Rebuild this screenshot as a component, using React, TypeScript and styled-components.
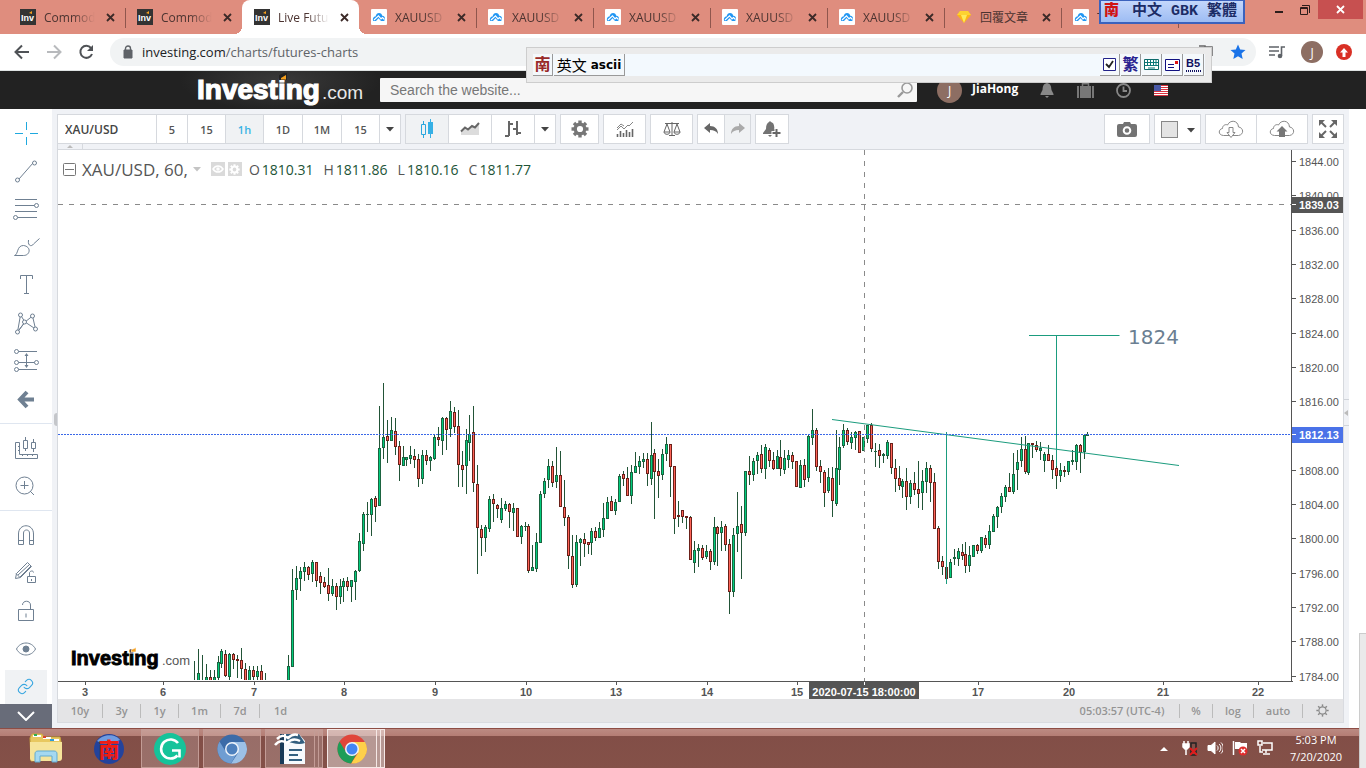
import React from 'react';
import styled, { createGlobalStyle, css } from 'styled-components';
import { Link as LinkIcon } from 'lucide-react';

const SANS = '"Open Sans", "Noto Sans CJK TC", sans-serif';
const ARIAL = '"Liberation Sans", "Noto Sans CJK TC", sans-serif';

const GlobalStyle = createGlobalStyle`
  *, *::before, *::after { box-sizing: border-box; }
  body { margin: 0; background: #fff; font-family: ${SANS}; overflow-x: hidden; }
  button, input { font: inherit; color: inherit; margin: 0; padding: 0; border: 0; background: none; }
  a { color: inherit; text-decoration: none; }
  svg { display: block; flex: none; }
`;

const Desktop = styled.div`
  position: relative;
  display: flex;
  flex-direction: column;
  min-height: 100vh;
`;

/* ---------- browser chrome ---------- */

const TabStrip = styled.div`
  display: flex;
  height: 34px;
  padding-left: 8px;
  background: #df8d7e;
  position: relative;
`;

const Tab = styled.div<{ $active?: boolean; $line?: boolean }>`
  position: relative;
  display: flex;
  align-items: center;
  flex: 0 0 117px;
  min-width: 0;
  padding: 0 9px 0 12px;
  font-size: 12px;
  color: #4b3330;
  ${(p) =>
    p.$line &&
    css`
      &::after {
        content: '';
        position: absolute;
        right: -1px;
        top: 8px;
        height: 20px;
        width: 1px;
        background: #8f564d;
      }
    `}
  ${(p) =>
    p.$active &&
    css`
      background: #fff;
      border-radius: 8px 8px 0 0;
      &::before,
      &::after {
        content: '';
        position: absolute;
        bottom: 0;
        width: 8px;
        height: 8px;
      }
      &::before {
        left: -8px;
        background: radial-gradient(circle at 0 0, transparent 8px, #fff 8px);
      }
      &::after {
        right: -8px;
        background: radial-gradient(circle at 100% 0, transparent 8px, #fff 8px);
      }
    `}
`;

const TabTitle = styled.span<{ $fade?: boolean }>`
  flex: 1;
  min-width: 0;
  margin: 0 8px;
  overflow: hidden;
  white-space: nowrap;
  ${(p) => p.$fade && css`mask-image: linear-gradient(to right, #000 55%, transparent 98%);`}
`;

const TabClose = styled.button`
  display: flex;
  flex: none;
  width: 12px;
  height: 16px;
  align-items: center;
  justify-content: center;
`;

const WindowButtons = styled.div`
  position: absolute;
  top: 0;
  right: 3px;
  display: flex;
  align-items: flex-start;
`;

const WindowButton = styled.button<{ $close?: boolean }>`
  display: flex;
  align-items: center;
  justify-content: center;
  width: ${(p) => (p.$close ? 45 : 26)}px;
  height: 19px;
  background: ${(p) => (p.$close ? '#c75050' : 'transparent')};
`;

const AddressRow = styled.div`
  display: flex;
  align-items: center;
  height: 37px;
  padding: 0 14px;
  border-bottom: 1px solid #dfe3e3;
  background: #fff;
`;

const NavButton = styled.button`
  display: flex;
  width: 16px;
  height: 24px;
  align-items: center;
  justify-content: center;
  margin-right: 16px;
`;

const Omnibox = styled.div`
  display: flex;
  align-items: center;
  gap: 16px;
  flex: 1;
  height: 28px;
  padding: 0 10px 0 12px;
  margin-right: 13px;
  border-radius: 14px;
  background: #f1f3f4;
  color: #5f6368;
  font-size: 13px;
`;

const Url = styled.span`
  display: flex;
  align-items: center;
  gap: 8px;
  flex: 1;
  b { font-weight: 400; color: #202124; }
`;

const ProfileGroup = styled.div`
  display: flex;
  align-items: center;
  gap: 13px;
`;

const RoundBadge = styled.button<{ $size: number; $color: string }>`
  display: flex;
  align-items: center;
  justify-content: center;
  width: ${(p) => p.$size}px;
  height: ${(p) => p.$size}px;
  border-radius: 50%;
  background: ${(p) => p.$color};
  color: #fff;
  font-size: 12px;
`;

/* ---------- site header ---------- */

const SiteHeader = styled.header`
  display: flex;
  align-items: center;
  height: 38px;
  padding-left: 197px;
  background: radial-gradient(ellipse 100px 30px at 280px 10px, #3a3a3a, #222);
`;

const SiteSearch = styled.label`
  display: flex;
  align-items: center;
  flex: 1;
  height: 24px;
  margin-left: 17px;
  padding: 0 4px 0 10px;
  background: #f6f6f6;
  border-radius: 1px;
  font: 14px ${ARIAL};
  input { flex: 1; outline: none; }
  input::placeholder { color: #777; opacity: 1; }
`;

const UserArea = styled.div`
  display: flex;
  align-items: center;
  width: 449px;
  padding-left: 20px;
`;

const UserName = styled.a`
  width: 56px;
  margin: 0 0 3px 10px;
  color: #fff;
  font-size: 12px;
  font-weight: 700;
`;

const HeaderIcon = styled.button`
  display: flex;
  width: 38px;
  justify-content: center;
`;

/* ---------- workspace ---------- */

const Workspace = styled.main`
  display: flex;
  flex: 1;
  padding-right: 17px;
`;

const DrawingRail = styled.nav`
  display: flex;
  flex-direction: column;
  width: 52px;
  padding-top: 5px;
  background: #fff;
`;

const ToolGroup = styled.div<{ $line?: boolean }>`
  ${(p) =>
    p.$line &&
    css`
      padding-bottom: 5px;
      margin-bottom: 5px;
      border-bottom: 1px solid #dfe6f0;
    `}
`;

const Tool = styled.button<{ $active?: boolean; $short?: boolean }>`
  display: block;
  width: 52px;
  height: ${(p) => (p.$short ? 36 : 38)}px;
  overflow: hidden;
  color: ${(p) => (p.$active ? '#37a6e0' : '#6f8092')};
  svg { fill: none; stroke: currentColor; }
`;

const RailMore = styled.button`
  display: flex;
  align-items: center;
  justify-content: center;
  width: 52px;
  height: 24px;
  margin-top: auto;
  background: #686c79;
`;

const ChartPanel = styled.section`
  position: relative;
  display: flex;
  flex-direction: column;
  flex: 1;
  min-width: 0;
  padding: 5px;
  background: #f0f2f6;
`;

const Toolbar = styled.div`
  display: flex;
  gap: 4px;
  height: 30px;
`;

const Spacer = styled.div`
  flex: 1;
`;

const ButtonGroup = styled.div`
  display: flex;
  border: 1px solid #d6d9de;
  background: #fff;
  > * + * { border-left: 1px solid #d6d9de; }
`;

const BarButton = styled.button<{ $w: number; $on?: boolean }>`
  display: flex;
  align-items: center;
  justify-content: center;
  width: ${(p) => p.$w}px;
  height: 28px;
  background: ${(p) => (p.$on ? '#f0f2f4' : '#fff')};
  color: ${(p) => (p.$on ? '#3bb3e4' : '#555')};
  font-size: 11px;
  font-weight: 600;
`;

const SymbolInput = styled.input`
  width: 98px;
  padding-left: 7px;
  color: #444;
  font-size: 12px;
  font-weight: 600;
`;

const Notch = styled.div`
  display: flex;
  justify-content: center;
  align-items: center;
  width: 26px;
  height: 5px;
  border: solid #d6d9de;
  border-width: 0 1px;
`;

const ChartBox = styled.div`
  position: relative;
  border: 1px solid #d6d9de;
  border-bottom: 0;
  background: #fff;
`;

const Legend = styled.div`
  position: absolute;
  top: 7px;
  left: 5px;
  display: flex;
  align-items: center;
  height: 24px;
  color: #555;
  font-size: 14px;
  white-space: nowrap;
`;

const LegendTitle = styled.span`
  margin: 0 5px 0 6px;
  font-size: 17px;
`;

const LegendMarks = styled.span`
  display: flex;
  gap: 3px;
  margin: 0 7px 0 10px;
`;

const LegendMark = styled.span`
  display: flex;
  align-items: center;
  justify-content: center;
  width: 14px;
  height: 14px;
  background: #dadada;
`;

const Quote = styled.span`
  margin-right: 10px;
  b { margin-left: 2px; font-weight: 400; color: #225437; }
`;

const RangeBar = styled.div`
  display: flex;
  align-items: center;
  height: 24px;
  border: 1px solid #d9dbe0;
  border-top: 0;
  background: #e4e4e6;
  color: #949494;
  font-size: 11px;
  font-weight: 600;
`;

const RangeButton = styled.button<{ $w: number; $last?: boolean }>`
  width: ${(p) => p.$w}px;
  height: 14px;
  line-height: 14px;
  border-right: 1px solid ${(p) => (p.$last ? 'transparent' : '#bbb')};
  display: flex;
  justify-content: center;
`;

const Handle = styled.span<{ $right?: boolean }>`
  position: absolute;
  top: ${(p) => (p.$right ? 290 : 304)}px;
  ${(p) => (p.$right ? 'right: 0;' : 'left: 2px;')}
  width: ${(p) => (p.$right ? 5 : 3)}px;
  height: ${(p) => (p.$right ? 27 : 13)}px;
  display: flex;
  align-items: center;
  border-radius: ${(p) => (p.$right ? '0' : '3px 0 0 3px')};
  background: ${(p) => (p.$right ? '#f0f2f6' : '#c4c6ca')};
  border: solid #d0d4da;
  border-width: ${(p) => (p.$right ? '1px 0' : '0')};
`;

/* ---------- taskbar ---------- */

const Taskbar = styled.footer`
  display: flex;
  height: 40px;
  padding-left: 17px;
  padding-right: 22px;
  background: linear-gradient(#8d4d45 0 1px, #bb8a82 1px, #b47d74 8px, #824e47 8px, #845148 100%);
`;

const TaskButton = styled.button<{ $state?: 'open' | 'current'; $stack?: boolean }>`
  position: relative;
  display: flex;
  align-items: center;
  justify-content: center;
  width: 58px;
  height: 39px;
  margin: 1px 4px 0 0;
  padding-right: ${(p) => (p.$stack ? 8 : 0)}px;
  ${(p) =>
    p.$state &&
    css`
      border: 1px solid ${p.$state === 'current' ? '#f5e8e6' : '#c39c96'};
      background: ${p.$state === 'current' ? 'rgba(255,255,255,.42)' : 'rgba(255,255,255,.18)'};
    `}
  ${(p) =>
    p.$stack &&
    css`
      &::after {
        content: '';
        position: absolute;
        right: 3px;
        top: 0;
        bottom: 0;
        width: 5px;
        border: solid ${p.$state === 'current' ? '#f5e8e6' : '#c39c96'};
        border-width: 0 1px;
      }
    `}
`;

const Tray = styled.div`
  display: flex;
  align-items: center;
  gap: 9px;
  margin-left: auto;
`;

const TrayMore = styled.button`
  margin-right: 5px;
`;

const Clock = styled.time`
  width: 56px;
  margin-left: 6px;
  color: #fff;
  font-size: 11px;
  line-height: 17px;
  text-align: center;
`;

/* ---------- floating input-method windows ---------- */

const ImeBar = styled.div`
  position: absolute;
  z-index: 2;
  top: 47px;
  left: 526px;
  right: 154px;
  height: 36px;
  padding: 6px;
  border: 1px solid #cdcdcd;
  background: #ebebeb;
`;

const ImeInner = styled.div`
  display: flex;
  height: 22px;
  background: #f3f9fe;
`;

const ImeKey = styled.button<{ $w: number }>`
  display: flex;
  align-items: center;
  justify-content: center;
  gap: 4px;
  width: ${(p) => p.$w}px;
  border-right: 1px solid #999;
  border-bottom: 1px solid #999;
  margin-right: 1px;
  background: #f4f8fb;
  color: #000;
  font: 15px ${ARIAL};
  white-space: nowrap;
  b { font: 700 12px "DejaVu Sans", sans-serif; }
`;

const ImeMark = styled.span<{ $color: string }>`
  color: ${(p) => p.$color};
  font: 700 16px/20px ${ARIAL};
`;

const ImeBadge = styled.div`
  position: absolute;
  z-index: 3;
  top: 0;
  right: 121px;
  display: flex;
  align-items: center;
  width: 146px;
  height: 24px;
  border: 2px solid #3b62bd;
  border-top: 1px solid #3b62bd;
  background: linear-gradient(#c4d7fb, #9dbcf3);
  color: #1c2c66;
  font: 700 15px/20px "Liberation Mono", "Noto Sans CJK TC", monospace;
  white-space: nowrap;
  span { padding-left: 10px; }
  strong { width: 21px; text-align: center; color: #d01414; font-weight: 900; }
`;

const SidePopup = styled.div`
  position: absolute;
  right: 0;
  bottom: 0;
  width: 7px;
  height: 135px;
  border: solid #ccc;
  border-width: 1px 0 0 1px;
  background: #eaeaea;
`;

/* ---------- chart data: x, high, body top, body bottom, low, g(ain) / l(oss) ---------- */

const CANDLES = `
194 661 680 680 680 g|198 649 673 681 681 g|202 655 680 680 680 g|206 664 677 681 681 g|210 670 677 681 681 l
214 670 677 681 681 g|218 656 662 677 680 g|221 649 651 663 667 g|225 650 654 675 676 l|229 653 654 676 679 g
233 653 654 659 668 l|237 655 659 660 677 l|241 648 660 668 678 l|245 663 669 681 681 l|249 666 670 681 681 g
253 666 670 676 680 l|257 666 671 676 680 g|261 665 671 681 681 l|265 673 680 680 680 g|288 655 666 681 681 g
292 569 590 666 666 g|296 566 578 589 599 g|300 567 571 578 590 g|304 562 567 571 580 g|308 566 567 574 579 l
312 560 562 573 581 g|316 562 562 580 586 l|320 572 576 582 593 l|324 577 582 586 587 l|328 568 585 593 600 l
332 579 586 593 595 g|336 583 586 596 609 l|340 579 586 596 603 g|343 578 581 586 601 g|347 577 581 586 590 l
351 580 580 586 601 g|355 570 571 581 599 g|359 533 541 570 571 g|363 512 514 543 550 g|367 502 514 514 531 g
371 498 499 514 535 g|375 496 498 506 521 l|379 406 448 505 505 g|383 383 437 447 458 g|387 420 436 440 462 l
391 417 430 440 440 g|395 418 431 446 454 l|399 441 446 464 480 l|403 446 457 465 465 g|406 457 457 459 465 g
410 446 455 458 463 g|414 449 456 459 467 l|418 454 459 478 486 l|422 450 455 478 483 g|426 450 455 460 464 l
430 456 457 460 470 g|434 435 437 458 459 g|438 427 437 439 445 l|442 417 418 440 454 g|446 417 418 429 449 l
450 401 411 428 436 g|454 407 412 426 432 l|458 410 426 464 486 l|462 451 465 469 486 l|466 429 440 465 493 g
469 415 434 442 460 g|473 406 432 482 491 l|477 465 484 527 573 l|481 525 529 537 555 l|485 525 527 537 551 g
489 496 499 528 531 g|493 494 499 503 521 l|497 504 505 508 517 l|501 498 508 519 522 g|505 501 504 508 510 g
509 503 504 511 527 l|513 503 508 512 530 g|517 508 508 536 536 l|521 525 526 536 543 g|525 522 526 526 530 g
528 524 526 570 572 l|532 545 567 570 570 g|536 533 542 568 571 g|540 491 494 542 542 g|544 478 481 493 497 g
548 459 466 479 487 g|552 461 466 482 486 l|556 447 475 481 487 g|560 451 475 506 506 l|564 480 507 517 525 l
568 515 517 555 568 l|572 535 556 584 587 l|576 535 542 584 586 g|580 538 539 542 565 g|584 533 539 543 556 l
588 542 542 544 553 l|591 528 531 542 554 g|595 527 531 537 540 l|599 522 528 537 537 g|603 503 518 529 536 g
607 497 502 518 518 g|611 496 501 510 510 l|615 499 502 510 514 g|619 474 476 501 501 g|623 471 474 478 485 l
627 467 478 495 495 l|631 465 472 495 503 g|635 452 466 472 472 g|639 456 461 466 473 g|643 453 459 461 467 g
647 453 459 473 485 l|651 422 455 478 484 g|654 449 453 471 518 l|658 459 471 475 497 l|662 449 454 474 479 g
666 437 444 453 460 g|670 444 444 466 496 l|674 466 466 518 533 l|678 501 515 516 526 l|682 510 510 516 522 l
686 516 516 517 528 l|690 516 517 559 559 l|694 541 550 562 572 g|698 544 548 550 566 g|702 545 548 557 559 l
706 545 551 556 558 g|710 549 551 561 569 l|714 517 527 561 564 g|717 526 527 533 565 l|721 521 527 532 550 g
725 524 526 544 550 l|729 539 544 591 613 l|733 528 535 591 596 g|737 492 526 533 551 g|741 506 524 532 578 l
745 471 471 532 535 g|749 456 471 474 484 l|753 458 461 474 480 g|757 452 455 460 473 g|761 445 454 468 472 l
765 444 447 468 478 g|769 448 450 460 466 l|773 452 460 468 469 l|777 450 456 468 468 g|780 440 457 468 475 l
784 450 458 469 473 g|788 450 455 459 467 g|792 452 455 461 468 l|796 461 461 486 486 l|800 460 465 487 487 g
804 459 465 479 486 l|808 435 436 477 481 g|812 409 430 437 444 g|816 428 430 466 470 l|820 460 466 471 482 l
824 470 472 492 506 l|828 468 477 490 492 g|832 467 478 500 516 l|836 430 468 503 505 g|839 437 447 469 484 g
843 424 430 445 447 g|847 428 430 441 444 l|851 432 437 442 448 g|855 431 432 437 449 g|859 431 431 452 452 l
863 437 437 450 450 g|867 425 425 438 442 g|871 423 425 448 451 l|875 443 451 451 466 g|879 444 450 455 467 l
883 453 454 455 462 g|887 440 442 455 458 g|891 443 443 467 473 l|895 459 468 478 491 l|899 466 478 485 489 l
902 479 481 486 497 g|906 468 481 496 509 l|910 480 483 496 503 g|914 472 483 489 494 l|918 461 489 493 507 l
922 470 481 492 509 g|926 462 468 481 492 g|930 465 468 482 501 l|934 473 482 528 528 l|938 526 528 561 568 l
942 556 561 566 574 l|946 556 567 578 583 l|950 559 562 577 577 g|954 549 557 558 564 g|958 548 551 558 565 g
962 544 552 555 559 l|965 542 554 565 572 l|969 546 555 565 571 g|973 545 545 556 556 g|977 544 545 550 553 l
981 537 537 550 552 g|985 535 538 544 547 l|989 525 531 544 548 g|993 514 516 531 531 g|997 506 507 516 527 g
1001 493 496 506 512 g|1005 485 487 496 501 g|1009 473 487 491 491 l|1013 453 474 491 493 g|1017 450 462 469 489 g
1021 437 449 460 466 g|1025 436 449 471 473 l|1028 443 443 472 474 g|1032 443 443 444 457 l|1036 441 445 449 451 l
1040 442 448 450 459 g|1044 452 454 460 471 g|1048 445 454 460 460 l|1052 455 460 469 478 l|1056 464 468 475 488 l
1060 463 470 475 481 g|1064 466 470 471 476 l|1068 461 461 471 474 g|1072 450 460 461 464 g|1076 444 445 461 469 g
1080 444 445 452 472 l|1084 434 435 451 458 g|1087 432 434 435 435 g`
  .trim()
  .split(/[|\n]/)
  .map((row) => {
    const [x, high, top, bottom, low, kind] = row.split(' ');
    return { x: +x, high: +high, top: +top, bottom: +bottom, low: +low, gain: kind === 'g' };
  });

const PRICES = Array.from({ length: 16 }, (_, i) => ({
  label: (1844 - i * 4).toFixed(2),
  y: Math.round(161 + i * 34.3),
}));

const DAYS: [number, string][] = [
  [85, '3'], [163, '6'], [254, '7'], [344, '8'], [435, '9'], [526, '10'], [616, '13'],
  [707, '14'], [797, '15'], [978, '17'], [1069, '20'], [1163, '21'], [1258, '22'],
];

const ChartSvg = styled.svg`
  width: 100%;
  height: auto;
  font-family: ${ARIAL};
  font-size: 11px;
  fill: #555;
`;

function Candle({ x, high, top, bottom, low, gain }: (typeof CANDLES)[number]) {
  return (
    <g shapeRendering="crispEdges">
      <rect x={x} y={high} width="1" height={low - high + 1} fill="#225437" />
      {top < 680 && (
        <>
          <rect x={x - 1} y={top} width="3" height={bottom - top + 1} fill={gain ? '#1b6440' : '#6b2019'} />
          {bottom - top > 1 && (
            <rect x={x} y={top + 1} width="1" height={bottom - top - 1} fill={gain ? '#00cc7c' : '#ff6458'} />
          )}
        </>
      )}
    </g>
  );
}

function Chart() {
  return (
    <ChartSvg viewBox="58 150 1285 549" role="img" aria-label="XAU/USD hourly candlestick chart">
      <defs>
        <clipPath id="plot"><rect x="58" y="150" width="1234" height="530" /></clipPath>
      </defs>
      <g clipPath="url(#plot)">{CANDLES.map((c) => <Candle key={c.x} {...c} />)}</g>
      <g stroke="#1b9c7e" fill="none">
        <path d="M832 419.500L1179 465.500" />
        <path d="M946.500 432V584M1056.500 335V466M1029 335.500H1119.500" />
      </g>
      <text x="1128" y="344" fontSize="20" fontFamily="DejaVu Sans" fill="#6b7f92">1824</text>
      <g>
        <text x="71" y="665" fontSize="20" fontWeight="700" fill="#000" stroke="#000" strokeWidth=".9">Investing</text>
        <text x="162" y="665" fontSize="13" fill="#555">.com</text>
        <path d="M131 650l5-2.500v4.500h-5z" fill="#f7a01d" stroke="#fff" strokeWidth=".6" />
      </g>
      <path d="M58 434.500H1292" stroke="#3a68e8" strokeDasharray="2 1" />
      <path d="M58 204.500H1292M864.500 150V681" stroke="#8a8a8a" strokeDasharray="5 6" fill="none" />
      <path d="M58 681.500H1292.500M1291.500 150V682" stroke="#555" fill="none" shapeRendering="crispEdges" />
      {PRICES.map((p) => (
        <g key={p.label}>
          <path d={`M1292 ${p.y + 0.5}h4`} stroke="#555" />
          {p.label !== '1812.00' && <text x="1299" y={p.y + 5}>{p.label}</text>}
        </g>
      ))}
      {DAYS.map(([x, label]) => (
        <g key={label}>
          <path d={`M${x + 0.5} 682v3`} stroke="#555" />
          <text x={x} y="696" textAnchor="middle" fontWeight="700">{label}</text>
        </g>
      ))}
      <g fontWeight="700">
        <rect x="1292" y="197" width="51" height="16" fill="#555" />
        <rect x="1292" y="427" width="51" height="16" fill="#4a72e8" />
        <rect x="809" y="682" width="110" height="17" fill="#555" />
        <path d="M1292 204.500h4M1292 434.500h4M864.500 682v3" stroke="#fff" />
        <g fill="#fff">
          <text x="1299" y="209">1839.03</text>
          <text x="1299" y="439">1812.13</text>
          <text x="864" y="696" textAnchor="middle">2020-07-15 18:00:00</text>
        </g>
      </g>
    </ChartSvg>
  );
}

/* ---------- icons ---------- */

const InvIcon = () => (
  <svg width="16" height="16" viewBox="0 0 16 16">
    <rect width="16" height="16" fill="#333" />
    <text x="1" y="12" fontSize="9" fontWeight="700" fill="#fff" fontFamily="Liberation Sans">Inv</text>
    <path d="M9 4l3-2v3z" fill="#f7a01d" />
  </svg>
);

const CloudIcon = () => (
  <svg width="16" height="16" viewBox="0 0 16 16">
    <rect width="16" height="16" rx="1" fill="#fff" />
    <path d="M2 9.500C2.500 8 3.500 7.500 4.500 7.500 5 5 6.500 4 8 4c1.800 0 3 1.200 3.300 2.800 1.800.2 2.900 1.500 2.700 3.200-.1.900-.5 1.500-1 2H10L7.500 9.300 5 12H2.500C1.800 11.300 1.700 10.300 2 9.500z" fill="#2196f3" />
    <path d="M3 11l4.500-4.200 2.500 3 1.500-1.300 2 2" stroke="#fff" strokeWidth="1.200" fill="none" />
  </svg>
);

const GemIcon = () => (
  <svg width="16" height="16" viewBox="0 0 16 16">
    <path d="M4 2h8l3 4-7 8-7-8z" fill="#fdb515" />
    <path d="M1 6h14L12 2H4z" fill="#fdd231" />
    <path d="M5 6h6l-3 8z" fill="#feea5a" />
  </svg>
);

const CrossIcon = ({ color = '#3c2a28' }: { color?: string }) => (
  <svg width="9" height="9" viewBox="0 0 9 9">
    <path d="M1 1l7 7M8 1L1 8" stroke={color} strokeWidth="1.800" />
  </svg>
);

const CaretIcon = ({ color = '#444' }: { color?: string }) => (
  <svg width="8" height="5" viewBox="0 0 8 5"><path d="M0 0h8L4 4.500z" fill={color} /></svg>
);

const GearIcon = ({ size, color, thin }: { size: number; color: string; thin?: boolean }) => (
  <svg width={size} height={size} viewBox="0 0 18 18" fill="none" stroke={color}>
    <circle cx="9" cy="9" r={thin ? 5 : 4.8} strokeWidth={thin ? 1.6 : 3.4} />
    {[0, 45, 90, 135, 180, 225, 270, 315].map((a) => (
      <path key={a} d="M9 .5v3" strokeWidth={thin ? 2 : 3.4} transform={`rotate(${a} 9 9)`} />
    ))}
  </svg>
);

const CandleIcon = () => (
  <svg width="14" height="20" viewBox="0 0 14 20">
    <path d="M3.500 2v3M3.500 16v3M1.500 5.500h4v10h-4z" fill="none" stroke="#2aa7de" />
    <path d="M8 3h5v12H8zM10 0h1v19h-1z" fill="#37b0e5" />
  </svg>
);

const AreaIcon = () => (
  <svg width="20" height="14" viewBox="0 0 20 14">
    <path d="M1 10l4-4 3 2 4-3 3 1 4-4v11H1z" fill="#dcdcdc" />
    <path d="M1 9.500l4-4 3 2 4-3.500 3 1.500 4-4.500" fill="none" stroke="#666" strokeWidth="2" />
  </svg>
);

const BarsIcon = () => (
  <svg width="18" height="18" viewBox="0 0 18 18">
    <path d="M1 16h4M5 1v15M5 4h4M9 9h4M13 1v14M13 13h4" stroke="#666" strokeWidth="2" fill="none" />
  </svg>
);

const IndicatorIcon = () => (
  <svg width="18" height="16" viewBox="0 0 18 16" fill="none" stroke="#666">
    <path d="M1.500 13v3M4.500 10v6M7.500 12v4M10.500 9v7M13.500 11v5M16.500 8v8" strokeWidth="1.600" />
    <path d="M1 9l4-4 3 3 4-4 1 1 4-4M1 7l4-4 3 2" strokeWidth=".8" />
  </svg>
);

const ScaleIcon = () => (
  <svg width="18" height="16" viewBox="0 0 18 16" fill="none" stroke="#666">
    <path d="M2 2.500h14M9 1v13M6 14.500h6M4 3l-3 8h6zM14 3l-3 8h6zM1 11c0 3 6 3 6 0M11 11c0 3 6 3 6 0" />
  </svg>
);

const UndoIcon = ({ flip }: { flip?: boolean }) => (
  <svg width="14" height="12" viewBox="0 0 14 12">
    <path
      d="M0 5l6-5v3c5 0 8 3 8 8-2-3-4-4-8-4v3z"
      fill={flip ? '#aaa' : '#666'}
      transform={flip ? 'matrix(-1 0 0 1 14 0)' : undefined}
    />
  </svg>
);

const AlertIcon = () => (
  <svg width="18" height="17" viewBox="0 0 18 17">
    <path d="M7 0l1 1c3 1 3 3 3.500 7L13 10v3H0v-1l3-4c0-4 1-6 3-7zM5 14h4l-2 2z" fill="#737373" />
    <path d="M13.500 7v10M8.500 12h9" stroke="#fff" strokeWidth="4" />
    <path d="M13.500 8v8M9.500 12h8" stroke="#666" strokeWidth="2" />
  </svg>
);

const CameraIcon = () => (
  <svg width="20" height="15" viewBox="0 0 20 15">
    <path d="M2 2h4l1-2h6l1 2h4a2 2 0 012 2v9a2 2 0 01-2 2H2a2 2 0 01-2-2V4a2 2 0 012-2z" fill="#737373" />
    <circle cx="10" cy="8.500" r="3.300" stroke="#fff" strokeWidth="2" fill="#737373" />
  </svg>
);

const StorageIcon = ({ up }: { up?: boolean }) => (
  <svg width="26" height="18" viewBox="0 0 26 18">
    <path d="M5.500 15.500C-.5 15 .5 9 4.500 8.500 4.500 5 8 4 9.500 5 12-.5 20 0 20.500 7c5 .5 6 7.500 0 8.500z" fill="#fff" stroke="#888" />
    {up ? (
      <path d="M13 6l5.500 5.500H16V17h-6v-5.500H7.500z" fill="#777" />
    ) : (
      <path d="M13 17.500l-4-5h2v-5h4v5h2z" fill="#fff" stroke="#888" />
    )}
  </svg>
);

const ExpandIcon = () => (
  <svg width="18" height="18" viewBox="0 0 18 18" fill="#666" stroke="#666" strokeWidth="2">
    {[0, 90, 180, 270].map((a) => (
      <g key={a} transform={`rotate(${a} 9 9)`}>
        <path d="M2 2l5 5" /><path d="M0 0h6L0 6z" stroke="none" />
      </g>
    ))}
  </svg>
);

const Dot = ({ x, y }: { x: number; y: number }) => <circle cx={x} cy={y} r="2" fill="#fff" />;

const TOOLS: { name: string; group: number; active?: boolean; short?: boolean; draw: React.ReactNode }[] = [
  { name: 'Cross', group: 0, active: true, draw: <path d="M15 19.500h8M30 19.500h8M26.500 8v8M26.500 23v8" stroke="#1fa9df" /> },
  { name: 'Trend line', group: 0, draw: <><path d="M19 27L33 11" /><Dot x={17.5} y={28} /><Dot x={34.5} y={11} /></> },
  { name: 'Fibonacci', group: 0, draw: <><path d="M15 9.500h22M15 15.500h20M15 21.500h22M17 27.500h20" /><Dot x={36.5} y={15.5} /><Dot x={15.5} y={27.5} /></> },
  { name: 'Brush', group: 0, draw: <path d="M14.500 27.500c4-1 2-10 9-10 8 1 7 10 0 10zM28.500 12c-1 6 3 7 5 4l6-5.500" /> },
  { name: 'Text', group: 0, draw: <path d="M20.500 13v-3.500h12V13M26.500 10v17M24 27.500h5" /> },
  { name: 'Pattern', group: 0, draw: <><path d="M17.500 28l3-17 4.500 7 7.500-6 3 13-10.500-7zM25 18l-7.500 10" /><Dot x={17.5} y={28} /><Dot x={20.5} y={11} /><Dot x={24.5} y={18} /><Dot x={32.5} y={12} /><Dot x={35.5} y={25} /></> },
  { name: 'Forecast', group: 0, draw: <><path d="M16 9.500h21M16 20.500h20M16 27.500h21M26.500 12v13" /><path d="M26.500 11l2 3h-4zM26.500 26l2-3h-4z" fill="currentColor" stroke="none" /><Dot x={16.5} y={9.5} /><Dot x={16.5} y={20.5} /><Dot x={36.5} y={20.5} /><Dot x={16.5} y={27.5} /></> },
  { name: 'Back', group: 0, draw: <path d="M27 12l-7 7.500 7 7.500M20 19.500h14" strokeWidth="4" /> },
  { name: 'Measure', group: 1, draw: <path d="M15.500 13.500h4v12h18v4h-22zM18 17.500h2M18 21.500h2M22.500 27v-2M27.500 27v-2M32.500 27v-2M23.500 11.500h4v8h-4zM25.500 8v3M25.500 20v2M31.500 13.500h4v6h-4zM33.500 10v3M33.500 20v3" /> },
  { name: 'Zoom', group: 1, draw: <><circle cx="24.500" cy="18.500" r="8.500" /><path d="M24.500 14v8M20.500 18.500h8M30 24l4 4" /></> },
  { name: 'Magnet', group: 2, draw: <path d="M18.500 28.500V18c0-11 15-11 15 0v10.500h-4V17c0-4-6-4-6 0v11.500zM18.500 24.500h5M29.500 24.500h4" /> },
  { name: 'Lock drawing', group: 2, draw: <><path d="M15.500 24.500l1-5 11-11 4 4-11 11zM18 21l11-10M20 23L31 12M16 19.500l4 4" /><path d="M27.500 22.500h8v6h-8zM29.500 22v-3.500c1-2 4-2 4 0M31.500 25v2" fill="#fff" /></> },
  { name: 'Lock', group: 2, draw: <path d="M18.500 17.500h15v11h-15zM22.500 13c0-5 8-5 8 0v4M26 21.500v4" /> },
  { name: 'Hide', group: 2, draw: <><path d="M16.500 19c4-8 15-8 19 0-4 8-15 8-19 0z" /><circle cx="26" cy="19" r="3" fill="currentColor" /></> },
  { name: 'Link', group: 2, active: true, short: true, draw: <><rect x="5" y="2" width="42" height="36" fill="#f0f2f4" stroke="none" /><LinkIcon x={17} y={10} width={17} height={17} strokeWidth={1.5} /></> },
];

const ToolSvg = ({ children }: { children: React.ReactNode }) => (
  <svg width="52" height="38" viewBox="0 0 52 38">{children}</svg>
);

const Wheel = ({ tone }: { tone: 'blue' | 'color' }) => {
  const c = tone === 'blue' ? ['#3b6ba8', '#9cc0e6', '#6f9dd2', '#4d80bd'] : ['#e0453a', '#fdd04a', '#1e9d58', '#4285f4'];
  return (
    <svg width="30" height="30" viewBox="0 0 30 30">
      <circle cx="15" cy="15" r="14.500" fill={c[0]} />
      <path d="M15 8h13a14.500 14.500 0 01-14 21.500L21 19z" fill={c[1]} />
      <path d="M2.500 7.500A14.500 14.500 0 0014 29.500L20 19 9 18z" fill={c[2]} />
      <circle cx="15" cy="15" r="7" fill="#eef3fa" />
      <circle cx="15" cy="15" r="5.500" fill={c[3]} />
    </svg>
  );
};

const LogoSvg = () => (
  <svg width="166" height="34" viewBox="0 0 166 34" role="img" aria-label="Investing.com" fontFamily="Liberation Sans">
    <text x="0" y="26" fontSize="28" fontWeight="700" fill="#fff" stroke="#fff" strokeWidth="1.200">Investing</text>
    <text x="125" y="26" fontSize="19" fill="#e8e8e8">.com</text>
    <path d="M83 3l6-3v6h-6z" fill="#222" stroke="#222" strokeWidth="2" />
    <path d="M84 5l5-3v4.500h-5z" fill="#f7a01d" />
  </svg>
);

const TABS = [
  { title: 'Commodities', icon: <InvIcon />, line: true },
  { title: 'Commodities', icon: <InvIcon /> },
  { title: 'Live Futures', icon: <InvIcon />, active: true },
  ...Array.from({ length: 5 }, () => ({ title: 'XAUUSD 1', icon: <CloudIcon />, line: true })),
  { title: '回覆文章', icon: <GemIcon />, line: true, plain: true },
  { title: 'T', icon: <CloudIcon />, line: true, plain: true },
] as { title: string; icon: React.ReactNode; line?: boolean; active?: boolean; plain?: boolean }[];

export default function App() {
  return (
    <Desktop>
      <GlobalStyle />
      <TabStrip>
        {TABS.map((t, i) => (
          <Tab key={i} $active={t.active} $line={t.line}>
            {t.icon}
            <TabTitle $fade={!t.plain}>{t.title}</TabTitle>
            <TabClose aria-label="Close tab"><CrossIcon /></TabClose>
          </Tab>
        ))}
        <WindowButtons>
          <WindowButton aria-label="Minimize">
            <svg width="8" height="19"><path d="M0 12h8" stroke="#2c1d1b" strokeWidth="2" /></svg>
          </WindowButton>
          <WindowButton aria-label="Restore">
            <svg width="10" height="10" fill="none" stroke="#2c1d1b"><path d="M.5 2.500h7v7h-7zM2 .5h7.500V8M.5 3.500h7" /></svg>
          </WindowButton>
          <WindowButton $close aria-label="Close"><CrossIcon color="#fff" /></WindowButton>
        </WindowButtons>
      </TabStrip>

      <AddressRow>
        <NavButton aria-label="Back">
          <svg width="16" height="16" fill="none" stroke="#4f5256" strokeWidth="2"><path d="M15 8H2M8 1.500L1.500 8 8 14.500" /></svg>
        </NavButton>
        <NavButton aria-label="Forward">
          <svg width="16" height="16" fill="none" stroke="#b8babd" strokeWidth="2"><path d="M1 8h13M8 1.500L14.500 8 8 14.500" /></svg>
        </NavButton>
        <NavButton aria-label="Reload">
          <svg width="16" height="16" fill="none" stroke="#4f5256" strokeWidth="2"><path d="M13 4a6 6 0 101 6" /><path d="M15 1v6H9z" fill="#4f5256" stroke="none" /></svg>
        </NavButton>
        <Omnibox>
          <Url>
            <svg width="12" height="14" viewBox="0 0 12 14"><path d="M2 5h8v8H2z" fill="#5f6368" stroke="#5f6368" strokeLinejoin="round" /><path d="M3.500 5V3.500a2.500 2.500 0 015 0V5" fill="none" stroke="#5f6368" strokeWidth="1.400" /></svg>
            <span><b>investing.com</b>/charts/futures-charts</span>
          </Url>
          <svg width="16" height="16" viewBox="0 0 16 16"><path d="M1 2h6v1h7v9" fill="none" stroke="#666" strokeWidth="1.500" /></svg>
          <svg width="16" height="16" viewBox="0 0 16 16"><path d="M8 .5l2.200 5 5.300.5-4 3.600 1.200 5.400L8 12.200 3.300 15l1.200-5.400-4-3.600 5.300-.5z" fill="#1a73e8" /></svg>
        </Omnibox>
        <NavButton aria-label="Media">
          <svg width="16" height="14" viewBox="0 0 16 14" fill="none" stroke="#5f6368" strokeWidth="1.600"><path d="M0 2h10M0 6h10M0 10h6M12.500 11V2H16" /><circle cx="11" cy="11" r="1.500" fill="#5f6368" /></svg>
        </NavButton>
        <ProfileGroup>
          <RoundBadge $size={22} $color="#8d6e63" aria-label="Profile">J</RoundBadge>
          <RoundBadge $size={16} $color="#d93025" aria-label="Update">
            <svg width="8" height="9"><path d="M4 0l4 4.500H5.500V9h-3V4.500H0z" fill="#fff" /></svg>
          </RoundBadge>
        </ProfileGroup>
      </AddressRow>

      <SiteHeader>
        <LogoSvg />
        <SiteSearch>
          <input type="text" placeholder="Search the website..." aria-label="Search the website" />
          <svg width="16" height="16" viewBox="0 0 16 16" fill="none" stroke="#999"><circle cx="10" cy="6" r="5" strokeWidth="1.600" /><path d="M6 10l-5 5" strokeWidth="2.400" /></svg>
        </SiteSearch>
        <UserArea>
          <RoundBadge $size={25} $color="#8d6e63" aria-label="Account">J</RoundBadge>
          <UserName href="#account">JiaHong</UserName>
          <HeaderIcon aria-label="Alerts">
            <svg width="14" height="15" viewBox="0 0 14 15"><path d="M7 0c4 1 4 3 4.500 7l2 4v1H.5v-1l2-4C3 3 3 1 7 0zM5 13h4l-2 2z" fill="#888" /></svg>
          </HeaderIcon>
          <HeaderIcon aria-label="Portfolio">
            <svg width="17" height="15" viewBox="0 0 17 15"><path d="M0 3h2v12H0zM3 3h11v12H3zM15 3h2v12h-2z" fill="#777" /><path d="M5.500 3V.8h6V3" fill="none" stroke="#777" strokeWidth="1.500" /></svg>
          </HeaderIcon>
          <HeaderIcon aria-label="History">
            <svg width="15" height="15" viewBox="0 0 15 15" fill="none" stroke="#888" strokeWidth="1.800"><circle cx="7.500" cy="7.500" r="6.500" /><path d="M7.500 3.500v4.500H11" /></svg>
          </HeaderIcon>
          <HeaderIcon aria-label="Language">
            <svg width="14" height="11" viewBox="0 0 14 11"><rect width="14" height="11" fill="#fff" /><path d="M0 .5h14M0 2.500h14M0 4.500h14M0 6.500h14M0 8.500h14M0 10.500h14" stroke="#d8323f" /><rect width="7" height="6" fill="#4a5aa8" /></svg>
          </HeaderIcon>
        </UserArea>
      </SiteHeader>

      <Workspace>
        <DrawingRail aria-label="Drawing tools">
          {[0, 1, 2].map((g) => (
            <ToolGroup key={g} $line={g < 2}>
              {TOOLS.filter((t) => t.group === g).map((t) => (
                <Tool key={t.name} aria-label={t.name} $active={t.active} $short={t.short}>
                  <ToolSvg>{t.draw}</ToolSvg>
                </Tool>
              ))}
            </ToolGroup>
          ))}
          <RailMore aria-label="More tools">
            <svg width="18" height="10" fill="none" stroke="#fff" strokeWidth="2"><path d="M1 1l8 8 8-8" /></svg>
          </RailMore>
        </DrawingRail>

        <ChartPanel>
          <Toolbar>
            <ButtonGroup>
              <SymbolInput defaultValue="XAU/USD" aria-label="Symbol" />
              <BarButton $w={31}>5</BarButton>
              <BarButton $w={38}>15</BarButton>
              <BarButton $w={38} $on>1h</BarButton>
              <BarButton $w={39}>1D</BarButton>
              <BarButton $w={39}>1M</BarButton>
              <BarButton $w={38}>15</BarButton>
              <BarButton $w={21} aria-label="More intervals"><CaretIcon /></BarButton>
            </ButtonGroup>
            <ButtonGroup>
              <BarButton $w={42} $on aria-label="Candles"><CandleIcon /></BarButton>
              <BarButton $w={43} aria-label="Area"><AreaIcon /></BarButton>
              <BarButton $w={43} aria-label="Bars"><BarsIcon /></BarButton>
              <BarButton $w={21} aria-label="More styles"><CaretIcon /></BarButton>
            </ButtonGroup>
            <ButtonGroup><BarButton $w={37} aria-label="Settings"><GearIcon size={18} color="#777" /></BarButton></ButtonGroup>
            <ButtonGroup><BarButton $w={41} aria-label="Indicators"><IndicatorIcon /></BarButton></ButtonGroup>
            <ButtonGroup><BarButton $w={41} aria-label="Compare"><ScaleIcon /></BarButton></ButtonGroup>
            <ButtonGroup>
              <BarButton $w={26} aria-label="Undo"><UndoIcon /></BarButton>
              <BarButton $w={26} $on aria-label="Redo"><UndoIcon flip /></BarButton>
            </ButtonGroup>
            <ButtonGroup><BarButton $w={32} aria-label="Add alert"><AlertIcon /></BarButton></ButtonGroup>
            <Spacer />
            <ButtonGroup><BarButton $w={44} aria-label="Snapshot"><CameraIcon /></BarButton></ButtonGroup>
            <ButtonGroup>
              <BarButton $w={45} aria-label="Layout">
                <svg width="34" height="17" viewBox="0 0 34 17"><rect x=".5" y=".5" width="16" height="16" fill="#e4e4e4" stroke="#888" /><path d="M26 7h8l-4 4.500z" fill="#444" /></svg>
              </BarButton>
            </ButtonGroup>
            <ButtonGroup>
              <BarButton $w={50} aria-label="Load"><StorageIcon /></BarButton>
              <BarButton $w={51} aria-label="Save"><StorageIcon up /></BarButton>
            </ButtonGroup>
            <ButtonGroup><BarButton $w={30} aria-label="Full screen"><ExpandIcon /></BarButton></ButtonGroup>
          </Toolbar>
          <Notch><svg width="6" height="3"><path d="M0 3l3-3 3 3z" fill="#bbb" /></svg></Notch>
          <ChartBox>
            <Chart />
            <Legend>
              <svg width="13" height="13" fill="none" stroke="#777"><rect x=".5" y=".5" width="12" height="12" rx="1" /><path d="M2 6.500h9" /></svg>
              <LegendTitle>XAU/USD, 60,</LegendTitle>
              <CaretIcon color="#c4c4c4" />
              <LegendMarks>
                <LegendMark><svg width="12" height="8" fill="none" stroke="#fff" strokeWidth="1.500"><path d="M1 4c2.500-4 7.500-4 10 0-2.500 4-7.500 4-10 0z" /><circle cx="6" cy="4" r="1" /></svg></LegendMark>
                <LegendMark><GearIcon size={11} color="#fff" /></LegendMark>
              </LegendMarks>
              <Quote>O<b>1810.31</b></Quote>
              <Quote>H<b>1811.86</b></Quote>
              <Quote>L<b>1810.16</b></Quote>
              <Quote>C<b>1811.77</b></Quote>
            </Legend>
          </ChartBox>
          <RangeBar>
            <RangeButton $w={45}>10y</RangeButton>
            <RangeButton $w={38}>3y</RangeButton>
            <RangeButton $w={38}>1y</RangeButton>
            <RangeButton $w={42}>1m</RangeButton>
            <RangeButton $w={39}>7d</RangeButton>
            <RangeButton $w={42} $last>1d</RangeButton>
            <Spacer />
            <RangeButton $w={115}>05:03:57 (UTC-4)</RangeButton>
            <RangeButton $w={33}>%</RangeButton>
            <RangeButton $w={41}>log</RangeButton>
            <RangeButton $w={49}>auto</RangeButton>
            <RangeButton $w={40} $last aria-label="Chart settings"><GearIcon size={13} color="#888" thin /></RangeButton>
          </RangeBar>
          <Handle />
          <Handle $right><svg width="5" height="6"><path d="M4 0v6L0 3z" fill="#bbb" /></svg></Handle>
        </ChartPanel>
      </Workspace>

      <Taskbar>
        <TaskButton aria-label="File Explorer">
          <svg width="34" height="32" viewBox="0 0 34 32">
            <path d="M1 5l2-4h10l2 3h16l1 5v17l-30 2z" fill="#e8c860" stroke="#c9a640" />
            <path d="M1 9h32v16c0 2-1 3-3 3H4c-2 0-3-1-3-3z" fill="#f6e49a" />
            <path d="M4 3h8M14 5h8M21 7h9" stroke="#fff" strokeWidth="2" />
            <path d="M5 2h3" stroke="#2fae4e" strokeWidth="2" /><path d="M21 7h4" stroke="#2c9bd8" strokeWidth="2" /><path d="M14 4h3" stroke="#d9432f" strokeWidth="2" />
            <path d="M6 29v-8c0-2 1-3 3-3h16c2 0 3 1 3 3v8h-5v-6H11v6z" fill="#a5d8f0" stroke="#63abd0" />
          </svg>
        </TaskButton>
        <TaskButton aria-label="Input method">
          <svg width="32" height="32" viewBox="0 0 32 32">
            <circle cx="17" cy="16" r="15" fill="#23439c" /><path d="M5 8c8-9 20-6 23-1-8 4-15 6-23 1z" fill="#6f9be0" />
            <text x="17" y="24" textAnchor="middle" fontSize="21" fontWeight="900" fill="#ee1c14" fontFamily="Noto Sans CJK TC">南</text>
          </svg>
        </TaskButton>
        <TaskButton $state="open" aria-label="Grammarly">
          <svg width="32" height="32" viewBox="0 0 32 32"><circle cx="16" cy="16" r="16" fill="#15c39a" /><path d="M24 10a9.500 9.500 0 10-.5 12.500M18 17.500h7.500v7" fill="none" stroke="#fff" strokeWidth="2.600" /></svg>
        </TaskButton>
        <TaskButton $state="open" aria-label="Chromium"><Wheel tone="blue" /></TaskButton>
        <TaskButton $state="open" $stack aria-label="Writer">
          <svg width="32" height="32" viewBox="0 0 32 32">
            <path d="M6 1h7v30H6z" fill="#183a58" /><path d="M10 1h15l6 7v23H10z" fill="#f6f9fc" /><path d="M12 1h13l6 9c-7 3-13-1-19-1z" fill="#335f7f" />
            <path d="M1 12C6 6 10 8 13 10 17 6 22 6 26 8M3 6c5-5 8-3 11-1 3-3 7-4 10-3" fill="none" stroke="#fff" strokeWidth="2.500" />
            <path d="M15 17h13M15 22h9M15 27h13" stroke="#335f7f" strokeWidth="2" />
          </svg>
        </TaskButton>
        <TaskButton $state="current" $stack aria-label="Chrome"><Wheel tone="color" /></TaskButton>
        <Tray>
          <TrayMore aria-label="Show hidden icons"><svg width="8" height="5"><path d="M0 5l4-4 4 4z" fill="#fff" /></svg></TrayMore>
          <svg width="16" height="16" viewBox="0 0 16 16" fill="none" stroke="#fff" strokeWidth="1.500"><path d="M2 1v3M6 1v3M4 9v6" /><path d="M1 4h6v3L5 9H3L1 7z" fill="#fff" /><path d="M9 3h5v12H9z" stroke="#222" /><path d="M8 8l7 7M15 8l-7 7" stroke="#e01c1c" strokeWidth="2" /></svg>
          <svg width="16" height="16" viewBox="0 0 16 16" fill="none" stroke="#fff"><path d="M1 5.500h3L8 2v12l-4-3.500H1z" fill="#fff" /><path d="M10 5.500c1.500 1 1.500 4 0 5M12 4c2.500 2 2.500 6 0 8M14 2.500c3 3 3 8 0 11" /></svg>
          <svg width="16" height="16" viewBox="0 0 16 16"><path d="M1.500 1v14" stroke="#fff" strokeWidth="1.500" /><path d="M3 2h5l1 1h6v7H8L7 9H3z" fill="#fff" /><circle cx="11" cy="11" r="4.500" fill="#e02d2d" /><path d="M9 9l4 4M13 9l-4 4" stroke="#fff" strokeWidth="1.500" /></svg>
          <svg width="16" height="16" viewBox="0 0 16 16" fill="none" stroke="#fff" strokeWidth="1.500"><path d="M6 3h9v7H5M9 10v3M6 14h7M3 6v6h3" /><path d="M1 1h4v4H1z" /></svg>
          <Clock>5:03 PM<br />7/20/2020</Clock>
        </Tray>
      </Taskbar>

      <ImeBar>
        <ImeInner>
          <ImeKey $w={20}><ImeMark $color="#992a28">南</ImeMark></ImeKey>
          <ImeKey $w={71}>英文 <b>ascii</b></ImeKey>
          <Spacer />
          <ImeKey $w={20} aria-label="Enable"><svg width="13" height="13" fill="none" stroke="#22228a"><path d="M.5.5h12v12H.5z" fill="#fff" /><path d="M3 6l3 3 4-6" strokeWidth="1.800" stroke="#222" /></svg></ImeKey>
          <ImeKey $w={20}><ImeMark $color="#2a2390">繁</ImeMark></ImeKey>
          <ImeKey $w={20} aria-label="Keyboard"><svg width="15" height="11"><path d="M.5.5h14v10H.5z" fill="#fff" stroke="#0c6a6a" /><path d="M1 3.500h13M1 6.500h13M3.500 1v6M6.500 1v6M9.500 1v6M12 1v6M4 9h7" stroke="#0c7878" /></svg></ImeKey>
          <ImeKey $w={20} aria-label="Message"><svg width="15" height="12"><path d="M.5.5h14v11H.5z" fill="#fff" stroke="#101080" /><path d="M3 5.500h6M3 8.500h6" stroke="#101080" /><path d="M10 2h3v3h-3z" fill="#e01414" /></svg></ImeKey>
          <ImeKey $w={20} aria-label="B5"><svg width="15" height="16"><text x="0" y="10" fontSize="11" fontWeight="700" fill="#101060" fontFamily="Liberation Sans">B5</text><path d="M0 14h15" stroke="#101060" strokeWidth="2" strokeDasharray="1 1" /></svg></ImeKey>
        </ImeInner>
      </ImeBar>
      <ImeBadge><strong>南</strong><span>中文 GBK 繁體</span></ImeBadge>
      <SidePopup />
    </Desktop>
  );
}
